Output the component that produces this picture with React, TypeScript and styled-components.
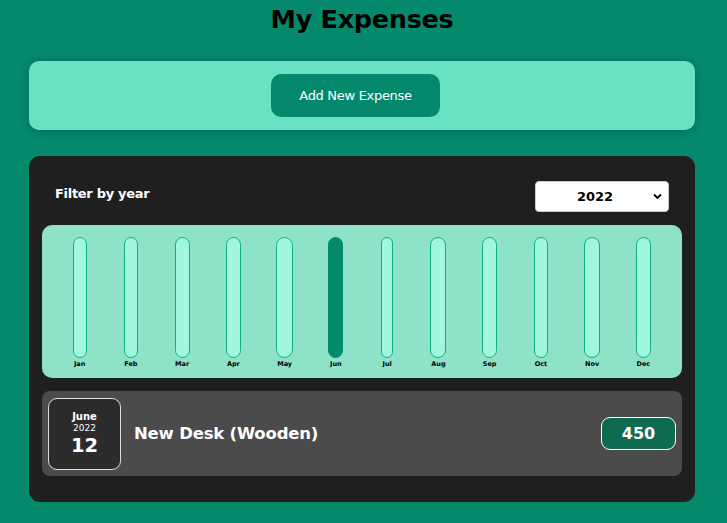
import React from "react";
import styled, { createGlobalStyle } from "styled-components";

const Global = createGlobalStyle`
  html, body { margin: 0; padding: 0; background: #04896d; }
  body { font-family: "DejaVu Sans", Verdana, sans-serif; }
  * { box-sizing: border-box; }
`;

const Page = styled.div`
  width: 727px;
  min-height: 523px;
  padding: 0 32px 0 29px;
  display: flex;
  flex-direction: column;
`;

const Title = styled.h1`
  margin: 4px 0 0;
  height: 39px;
  text-align: center;
  font-size: 25.5px;
  font-weight: bold;
  color: #000;
  letter-spacing: -0.3px;
`;

const NewExpenseCard = styled.div`
  margin-top: 18px;
  height: 69px;
  background: #69e2c4;
  border-radius: 10px;
  box-shadow: 0 1px 8px rgba(0, 0, 0, 0.25);
  display: flex;
  justify-content: center;
  align-items: center;
`;

const AddButton = styled.button`
  width: 169px;
  height: 43px;
  margin-right: 13px;
  border: none;
  border-radius: 10px;
  background: #04896d;
  color: #fff;
  font-family: "DejaVu Sans", Verdana, sans-serif;
  font-size: 13px;
  letter-spacing: -0.3px;
  cursor: pointer;
`;

const ExpensesCard = styled.div`
  margin-top: 26px;
  height: 346px;
  background: #1f1f1f;
  border-radius: 11px;
  padding: 13px 13px;
  display: flex;
  flex-direction: column;
`;

const FilterRow = styled.div`
  display: flex;
  justify-content: space-between;
  align-items: flex-start;
  padding: 12px 13px 0 13px;
  height: 56px;
`;

const FilterLabel = styled.label`
  color: #fff;
  font-weight: bold;
  font-size: 13px;
  letter-spacing: -0.3px;
  margin-top: 5px;
`;

const YearSelect = styled.div`
  width: 134px;
  height: 31px;
  padding-right: 14px;
  background: #fff;
  border-radius: 4px;
  border: 1px solid #ccc;
  display: flex;
  align-items: center;
  justify-content: center;
  position: relative;
  font-weight: bold;
  font-size: 13px;
  color: #000;
`;

const Caret = styled.svg`
  position: absolute;
  right: 6px;
  top: 11px;
`;

const Chart = styled.div`
  height: 153px;
  background: #8ee2c8;
  border-radius: 10px;
  padding: 12px 13px 0 12px;
  display: grid;
  grid-template-columns: repeat(12, 1fr);
`;

const BarColumn = styled.div`
  display: flex;
  flex-direction: column;
  align-items: center;
`;

const BarTrack = styled.div<{ $w: number; $filled: boolean }>`
  width: ${(p) => p.$w}px;
  height: 121px;
  border-radius: 10px;
  border: 1px solid ${(p) => (p.$filled ? "#038a6d" : "#0fb07f")};
  background: ${(p) => (p.$filled ? "#038a6d" : "#a1f7de")};
`;

const BarLabel = styled.div`
  font-size: 6.5px;
  font-weight: bold;
  color: #000;
  margin-top: 2px;
`;

const ExpenseItem = styled.div`
  margin-top: 13px;
  height: 85px;
  background: #4b4b4b;
  border-radius: 8px;
  padding: 6px;
  display: flex;
  align-items: center;
`;

const DateBox = styled.div`
  width: 73px;
  height: 72px;
  background: #2b2b2b;
  border: 1px solid #ddd;
  border-radius: 9px;
  display: flex;
  flex-direction: column;
  align-items: center;
  justify-content: center;
  color: #fff;
`;

const DateMonth = styled.div`
  font-size: 10px;
  font-weight: bold;
  line-height: 12px;
`;

const DateYear = styled.div`
  font-size: 9px;
  line-height: 11px;
`;

const DateDay = styled.div`
  font-size: 19.5px;
  font-weight: bold;
  line-height: 23px;
`;

const ItemTitle = styled.h2`
  flex: 1;
  margin: 0 0 0 13px;
  font-size: 16.5px;
  font-weight: bold;
  color: #fff;
  letter-spacing: -0.2px;
`;

const Amount = styled.div`
  width: 75px;
  height: 33px;
  background: #0f6a52;
  border: 1px solid #fff;
  border-radius: 9px;
  color: #fff;
  font-weight: bold;
  font-size: 16px;
  display: flex;
  align-items: center;
  justify-content: center;
`;

const months = [
  ["Jan", 14], ["Feb", 14], ["Mar", 15], ["Apr", 15], ["May", 17], ["Jun", 15],
  ["Jul", 12], ["Aug", 16], ["Sep", 15], ["Oct", 14], ["Nov", 16], ["Dec", 15],
] as const;

export default function App() {
  return (
    <>
      <Global />
      <Page>
        <Title>My Expenses</Title>
        <NewExpenseCard>
          <AddButton>Add New Expense</AddButton>
        </NewExpenseCard>
        <ExpensesCard>
          <FilterRow>
            <FilterLabel>Filter by year</FilterLabel>
            <YearSelect>
              2022
              <Caret width="9" height="7" viewBox="0 0 9 7">
                <path d="M1 1.5 L4.5 5 L8 1.5" stroke="#000" strokeWidth="1.8" fill="none" />
              </Caret>
            </YearSelect>
          </FilterRow>
          <Chart>
            {months.map(([m, w]) => (
              <BarColumn key={m}>
                <BarTrack $w={w} $filled={m === "Jun"} />
                <BarLabel>{m}</BarLabel>
              </BarColumn>
            ))}
          </Chart>
          <ExpenseItem>
            <DateBox>
              <DateMonth>June</DateMonth>
              <DateYear>2022</DateYear>
              <DateDay>12</DateDay>
            </DateBox>
            <ItemTitle>New Desk (Wooden)</ItemTitle>
            <Amount>450</Amount>
          </ExpenseItem>
        </ExpensesCard>
      </Page>
    </>
  );
}
